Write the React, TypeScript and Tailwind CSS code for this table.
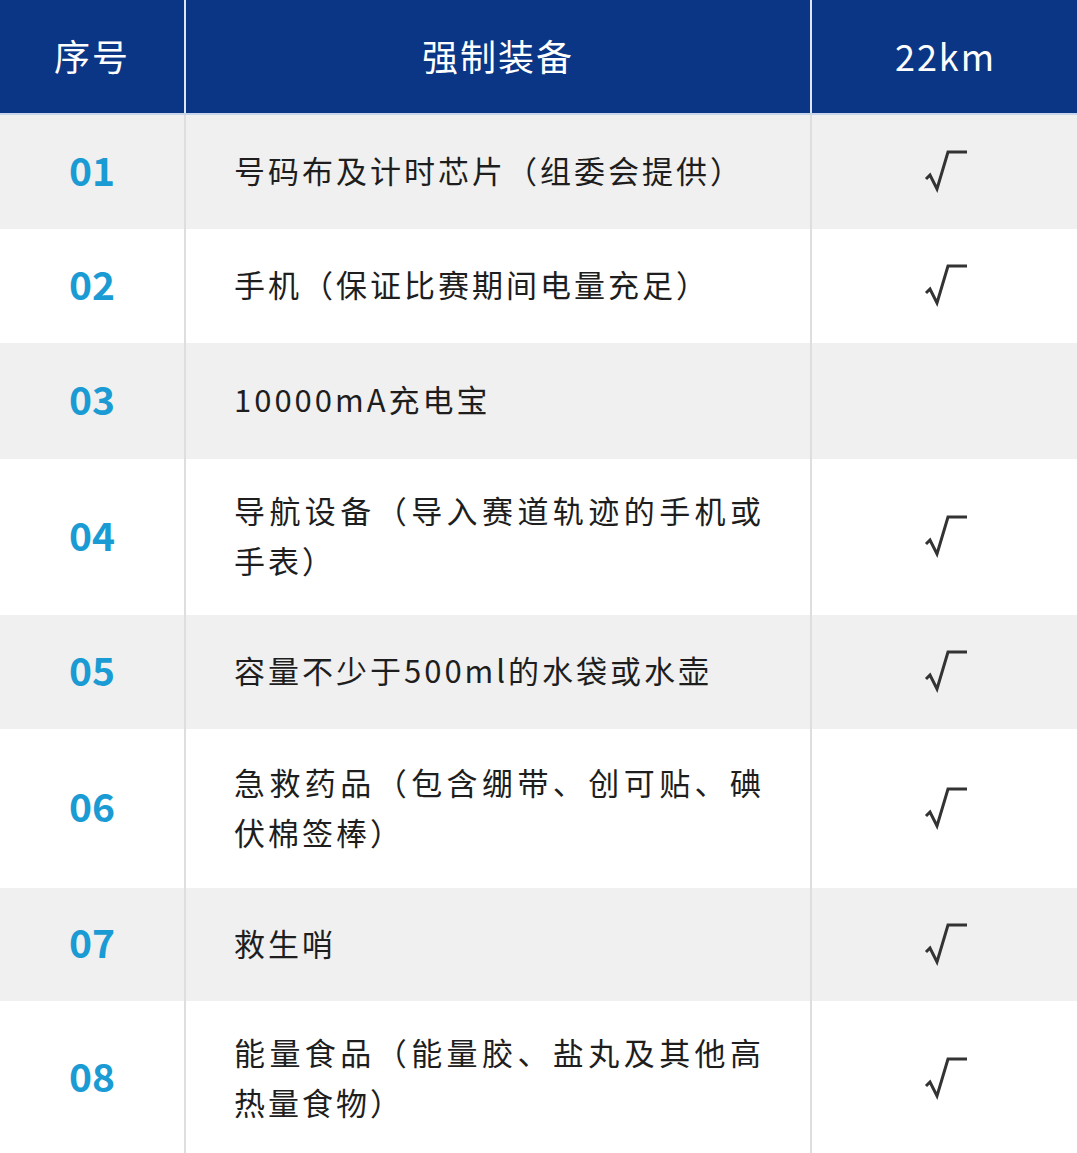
const font = { fontFamily: '"Noto Sans CJK SC", "Noto Sans", sans-serif' };

type Row = { no: string; lines: string[]; check: boolean; h: string; bg: string };

const rows: Row[] = [
  { no: "01", lines: ["号码布及计时芯片（组委会提供）"], check: true, h: "h-[114px]", bg: "bg-[#f0f0f0]" },
  { no: "02", lines: ["手机（保证比赛期间电量充足）"], check: true, h: "h-[114px]", bg: "bg-white" },
  { no: "03", lines: ["10000mA充电宝"], check: false, h: "h-[116px]", bg: "bg-[#f0f0f0]" },
  { no: "04", lines: ["导航设备（导入赛道轨迹的手机或", "手表）"], check: true, h: "h-[156px]", bg: "bg-white" },
  { no: "05", lines: ["容量不少于500ml的水袋或水壶"], check: true, h: "h-[114px]", bg: "bg-[#f0f0f0]" },
  { no: "06", lines: ["急救药品（包含绷带、创可贴、碘", "伏棉签棒）"], check: true, h: "h-[159px]", bg: "bg-white" },
  { no: "07", lines: ["救生哨"], check: true, h: "h-[113px]", bg: "bg-[#f0f0f0]" },
  { no: "08", lines: ["能量食品（能量胶、盐丸及其他高", "热量食物）"], check: true, h: "h-[155px]", bg: "bg-white" },
];

function Check() {
  return (
    <svg width="44" height="46" viewBox="0 0 44 46" fill="none">
      <path d="M2 31 L6 27 L13 41 L24 4 L43 4" stroke="#333" strokeWidth="3" strokeLinejoin="miter" />
    </svg>
  );
}

export default function App() {
  return (
    <div className="w-[1077px] h-[1153px] overflow-hidden bg-white" style={font}>
      <div className="flex h-[113px] bg-[#0b3585] pb-[4px] text-white text-[36px] tracking-[2px]">
        <div className="flex w-[184px] items-center justify-center">序号</div>
        <div className="-mb-[4px] w-[2px] bg-[#dfe6f2]" />
        <div className="flex w-[624px] items-center justify-center">强制装备</div>
        <div className="-mb-[4px] w-[2px] bg-[#dfe6f2]" />
        <div className="flex flex-1 items-center justify-center pl-[2px]">22km</div>
      </div>
      <div className="h-[2px] bg-[#c9d5ea]" />
      {rows.map((r) => (
        <div key={r.no} className={`flex ${r.h} ${r.bg}`}>
          <div className="flex w-[184px] items-center justify-center pb-[6px] text-[39px] font-bold text-[#1a9bd3]">
            {r.no}
          </div>
          <div className="w-[2px] bg-[#dedede]" />
          <div className="flex w-[624px] flex-col justify-center pb-[4px] pl-[48px] text-[31px] leading-[50px] text-[#1e1e1e] tracking-[3px]">
            {r.lines.map((l, i) => (
              <div
                key={i}
                className={r.lines.length > 1 && i === 0 ? "w-[527px] text-justify [text-align-last:justify] tracking-normal" : ""}
              >
                {l}
              </div>
            ))}
          </div>
          <div className="w-[2px] bg-[#dedede]" />
          <div className="flex flex-1 items-center justify-center pb-[2px] pl-[2px]">{r.check && <Check />}</div>
        </div>
      ))}
    </div>
  );
}
